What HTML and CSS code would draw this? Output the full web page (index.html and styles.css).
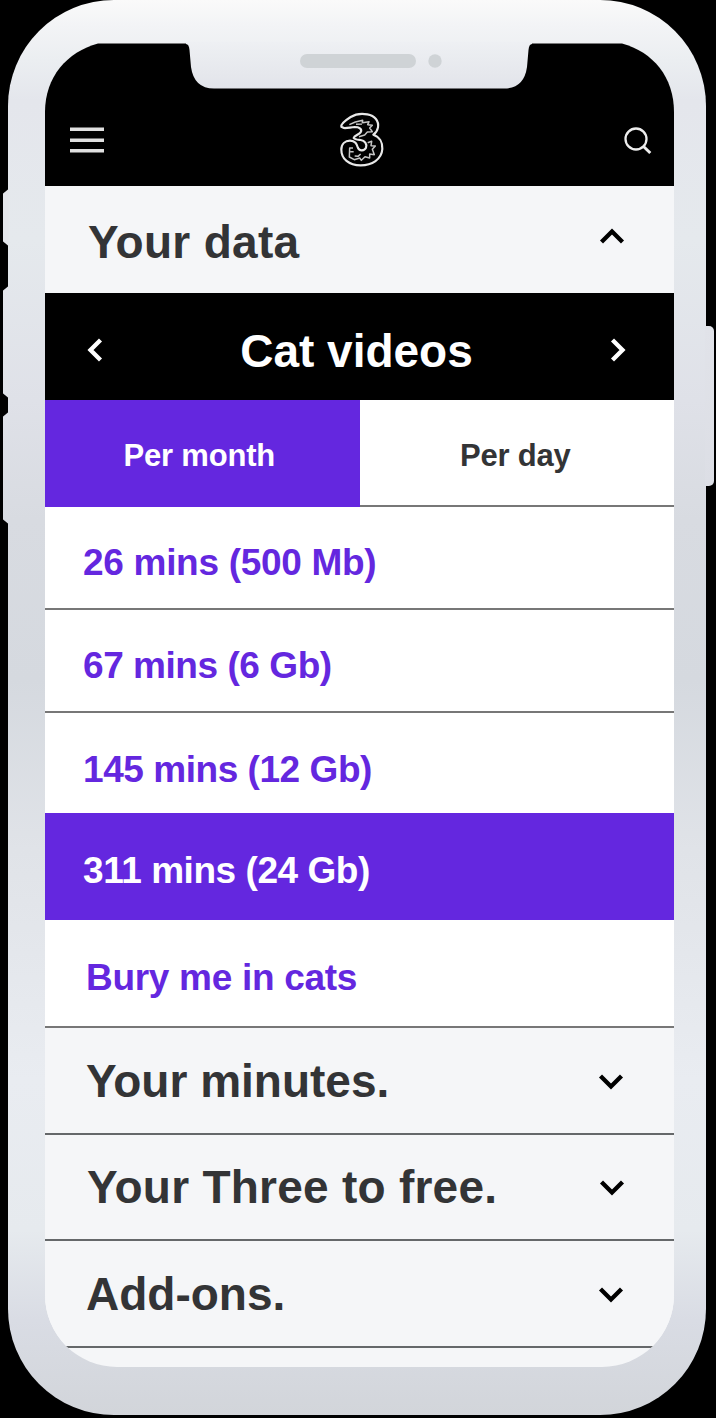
FILE: index.html
```html
<!DOCTYPE html>
<html lang="en">
<head>
    <meta charset="UTF-8">
    <meta name="viewport" content="width=device-width, initial-scale=1.0">
    <title>Three - Your data</title>
    <link rel="stylesheet" href="styles.css">
</head>
<body>
    <div class="phone">
        <!-- Side buttons -->
        <span class="side-btn mute"></span>
        <span class="side-btn volume-up"></span>
        <span class="side-btn volume-down"></span>
        <span class="side-btn power"></span>

        <div class="screen">
            <header class="header">
                <svg class="menu-icon" width="34" height="27" viewBox="0 0 34 27">
                    <path d="M0 2.3H34M0 13.3H34M0 23.8H34" fill="none" stroke="#e0e0e0" stroke-width="3.5"/>
                </svg>
                <svg class="logo" width="80" height="80" viewBox="0 0 240 240" fill="none" stroke="#e8e8e8" stroke-linejoin="round">
                    <path stroke-width="6.500" d="M64 80C62 72 78 60 92 51C108 41 126 40 142 43C165 47 177 63 174 82C172 93 167 99 160 104C178 110 188 127 187 147C185 178 156 196 122 196C86 196 64 176 64 149C64 131 76 122 90 122C106 122 110 132 114 144C119 154 133 153 138 143C142 132 134 122 122 120C112 119 104 119 101 114C103 107 115 105 122 97C128 86 116 81 104 81C91 82 80 85 72 84Z"/>
                    <path stroke-width="4.500" stroke="#c4c4c4" d="M88 74L106 66L128 61L127 68L147 65L143 74L157 76L149 84L157 95L142 96L134 105L117 110M108 73L126 72M143 128L155 124L153 137L166 138L157 148L163 164L149 162L149 174L135 170L124 181L119 174L103 179L88 171L89 144L99 144M91 155L101 155M104 168L114 169L122 162"/>
                </svg>
                <svg class="search-icon" width="28" height="28" viewBox="0 0 28 28" fill="none" stroke="#ededed">
                    <circle cx="12" cy="12" r="10.5" stroke-width="2.3"/>
                    <path d="M19 19L26.3 26" stroke-width="3"/>
                </svg>
            </header>

            <div class="section section-open">
                <h2>Your data</h2>
                <svg class="chevron" width="26" height="16" viewBox="0 0 26 16"><path d="M2.5 14L13 3.5L23.5 14"/></svg>
            </div>

            <!-- Usage picker -->
            <div class="picker">
                <svg class="arrow" width="16" height="26" viewBox="0 0 16 26"><path d="M13.5 3L3.500 13L13.5 23"/></svg>
                <h2>Cat videos</h2>
                <svg class="arrow" width="16" height="26" viewBox="0 0 16 26"><path d="M2.5 3L12.500 13L2.5 23"/></svg>
            </div>

            <div class="tabs">
                <div class="tab active">Per month</div>
                <div class="tab">Per day</div>
            </div>

            <ul class="options">
                <li>26 mins (500 Mb)</li>
                <li>67 mins (6 Gb)</li>
                <li class="third">145 mins (12 Gb)</li>
                <li class="selected">311 mins (24 Gb)</li>
                <li class="last">Bury me in cats</li>
            </ul>

            <div class="section">
                <h2>Your minutes.</h2>
                <svg class="chevron" width="26" height="16" viewBox="0 0 26 16"><path d="M2.5 2L13 12.5L23.5 2"/></svg>
            </div>
            <div class="section free">
                <h2>Your Three to free.</h2>
                <svg class="chevron" width="26" height="16" viewBox="0 0 26 16"><path d="M2.5 2L13 12.5L23.5 2"/></svg>
            </div>
            <div class="section addons">
                <h2>Add-ons.</h2>
                <svg class="chevron" width="26" height="16" viewBox="0 0 26 16"><path d="M2.5 2L13 12.5L23.5 2"/></svg>
            </div>
        </div>

        <!-- Notch with speaker and camera -->
        <svg class="notch" width="346" height="48" viewBox="0 0 346 48">
            <defs>
                <linearGradient id="notchFill" x1="0" y1="0" x2="0" y2="1">
                    <stop offset="0" stop-color="#eef0f3"/>
                    <stop offset="1" stop-color="#e2e4ea"/>
                </linearGradient>
            </defs>
            <path d="M0 0V2Q3 2 3.5 8L5 25Q8 46.500 28 46.500H318Q338 46.500 341 25L342.500 8Q343 2 346 2V0Z" fill="url(#notchFill)"/>
            <rect x="114" y="12" width="116" height="14" rx="7" fill="#cfd3d6"/>
            <circle cx="249" cy="19" r="6.700" fill="#cfd3d6"/>
        </svg>
    </div>
</body>
</html>
```
FILE: styles.css
```css
* {
    box-sizing: border-box;
}
body {
    margin: 0;
    background: #000;
    font-family: "Liberation Sans", Arial, sans-serif;
    font-weight: bold;
    color: #333436;
}
h2 {
    margin: 0;
    font-size: 46px;
    line-height: 52px;
    white-space: nowrap;
}
.phone {
    position: relative;
    width: 698px;
    height: 1415px;
    margin-left: 8px;
    padding: 43px 32px 48px 37px;
    border-radius: 106px;
    background: linear-gradient(#fafafa 0, #f3f4f6 25px, #ebeef1 60px, #e4e6ec 100px, #e5e9ed 240px, #dfe1e8 400px, #d8dbe1 520px, #d5d9df 680px, #e0e3e8 850px, #e9ecf1 1080px, #e6eaee 1230px, #d9dce4 1320px, #d2d5da 1415px);
}
.side-btn {
    position: absolute;
    left: -5.500px;
    width: 6px;
    background: #e4e6eb;
    clip-path: polygon(0 5px, 6px 0, 6px 100%, 0 calc(100% - 5px));
}
.mute {
    top: 189px;
    height: 57px;
}
.volume-up {
    top: 286px;
    height: 112px;
    background: linear-gradient(#e4e6ec, #e0e2e8);
}
.volume-down {
    top: 412px;
    height: 112px;
    background: linear-gradient(#dfe1e8, #d8dbe1);
}
.power {
    left: 697px;
    top: 326px;
    width: 9px;
    height: 160px;
    border-radius: 0 5px 5px 0;
    background: linear-gradient(#e1e3e9, #dcdee5);
    clip-path: none;
}
.screen {
    height: 1324px;
    background: #f5f6f8;
    clip-path: path("M0 69C0 34 22 9 53 .5H577C608 9 629 34 629 69V1252A72 72 0 0 1 557 1324H72A72 72 0 0 1 0 1252Z");
}
.notch {
    position: absolute;
    left: 178px;
    top: 42px;
}

.header {
    display: flex;
    justify-content: space-between;
    align-items: flex-start;
    height: 143px;
    padding: 57px 22px 0 25px;
    background: #000;
}
.menu-icon {
    margin-top: 27px;
}
.logo {
    margin-left: -8px;
}
.search-icon {
    margin-top: 27px;
}

.section {
    display: flex;
    justify-content: space-between;
    align-items: flex-start;
    height: 107px;
    padding: 27px 50px 0 41px;
    border-bottom: 2px solid #65686a;
    background: #f5f6f8;
}
.section-open {
    padding: 30px 49px 0 43px;
    border-bottom: 0;
    letter-spacing: .3px;
}
.free {
    height: 106px;
    padding: 26px 49px 0 42px;
    letter-spacing: .25px;
}
.chevron {
    margin-top: 19px;
    fill: none;
    stroke: #000;
    stroke-width: 4.300;
}
.section-open .chevron {
    margin-top: 12px;
}

.picker {
    display: flex;
    justify-content: space-between;
    height: 107px;
    padding: 32px 48px 0 42px;
    background: #000;
    color: #fff;
}
.arrow {
    margin-top: 12px;
    fill: none;
    stroke: #fff;
    stroke-width: 4.300;
}

.tabs {
    display: flex;
    height: 107px;
    background: #fff;
}
.tab {
    width: 50%;
    padding: 38px 3px 0 0;
    font-size: 31px;
    letter-spacing: -.2px;
    line-height: 36px;
    text-align: center;
    border-bottom: 2px solid #777;
}
.tab.active {
    padding-right: 6px;
    background: #6427df;
    border-color: #6427df;
    color: #fff;
}

.options {
    margin: 0;
    padding: 0;
    list-style: none;
    background: #fff;
    color: #6427df;
    font-size: 37px;
    letter-spacing: -.45px;
    line-height: 42px;
}
.options li {
    height: 103px;
    padding: 35px 0 0 38px;
    border-bottom: 2px solid #777;
}
.options li:first-child {
    letter-spacing: -.3px;
}
.options .third {
    height: 100px;
    padding-top: 36px;
    border-bottom: 0;
}
.options .selected {
    height: 107px;
    padding-top: 37px;
    background: #6427df;
    border-bottom: 0;
    color: #fff;
}
.options .last {
    height: 108px;
    padding: 37px 0 0 41px;
    letter-spacing: -.3px;
}
```
